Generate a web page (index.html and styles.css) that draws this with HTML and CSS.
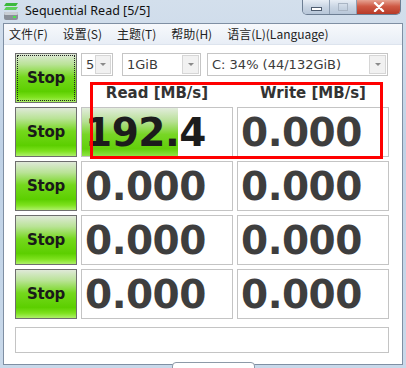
FILE: index.html
```html
<!DOCTYPE html>
<html lang="zh-CN">
<head>
    <meta charset="UTF-8">
    <meta name="viewport" content="width=device-width, initial-scale=1.0">
    <title>Sequential Read [5/5]</title>
    <link rel="stylesheet" href="styles.css">
</head>
<body>
    <div class="window">
        <div class="titlebar">
            <svg class="app-icon" width="16" height="19" viewBox="0 0 16 19">
                <path d="M3 1h12l-2 3H1z" fill="#3cb83c"/>
                <path d="M3 5h12l-2 3H1z" fill="#5fd05a"/>
                <rect x="1" y="10" width="14" height="8" rx="2" fill="#8a9099"/>
                <rect x="1" y="10" width="14" height="3" rx="1.5" fill="#c9ced4"/>
                <rect x="10" y="14" width="3" height="2" fill="#4ee04e"/>
            </svg>
            <span class="title">Sequential Read [5/5]</span>
            <div class="caption-buttons">
                <span class="cap cap-min"><i></i></span>
                <span class="cap cap-max"><i></i></span>
                <span class="cap cap-close">
                    <svg width="12" height="10" viewBox="0 0 12 10">
                        <path d="M2 1l8 8M10 1l-8 8" stroke="#fff" stroke-width="2.4" stroke-linecap="round"/>
                    </svg>
                </span>
            </div>
        </div>

        <div class="client">
            <div class="menubar">
                <span>文件(F)</span>
                <span>设置(S)</span>
                <span>主题(T)</span>
                <span>帮助(H)</span>
                <span>语言(L)(Language)</span>
            </div>

            <div class="panel">
                <button class="stop focused">Stop</button>
                <div class="settings">
                    <div class="combos">
                        <div class="combo combo-count"><span>5</span><b class="arrow"></b></div>
                        <div class="combo combo-size"><span>1GiB</span><b class="arrow"></b></div>
                        <div class="combo combo-drive"><span>C: 34% (44/132GiB)</span><b class="arrow"></b></div>
                    </div>
                    <div class="headers">
                        <span>Read [MB/s]</span>
                        <span>Write [MB/s]</span>
                    </div>
                </div>

                <button class="stop">Stop</button>
                <div class="cell active" style="background-size: 64% 100%">192.4</div>
                <div class="cell">0.000</div>

                <button class="stop">Stop</button>
                <div class="cell">0.000</div>
                <div class="cell">0.000</div>

                <button class="stop">Stop</button>
                <div class="cell">0.000</div>
                <div class="cell">0.000</div>

                <button class="stop">Stop</button>
                <div class="cell">0.000</div>
                <div class="cell">0.000</div>

                <div class="comment"></div>
            </div>
        </div>

        <div class="highlight"></div>
        <div class="task-tab"></div>
    </div>
</body>
</html>
```

FILE: styles.css
```css
body {
    margin: 0;
    width: 406px;
    height: 368px;
    overflow: hidden;
    background: #c5d6e9;
}
.window {
    position: relative;
    width: 406px;
    height: 368px;
    background: linear-gradient(180deg, #d3dfec, #c0d2e6 40%, #c9d9ea);
    font-family: 'DejaVu Sans', sans-serif;
}
.titlebar {
    display: flex;
    align-items: flex-start;
    height: 23px;
    padding-left: 3px;
}
.app-icon {
    margin-top: 2px;
}
.title {
    margin-left: 6px;
    margin-top: 2px;
    font-family: 'Noto Sans', sans-serif;
    font-size: 12.5px;
    color: #111;
    line-height: 17px;
}
.caption-buttons {
    display: flex;
    margin-left: auto;
    margin-right: 5px;
    height: 14px;
    border: 1px solid #6d7e93;
    border-top: none;
    border-radius: 0 0 5px 5px;
    overflow: hidden;
}
.cap {
    display: flex;
    align-items: center;
    justify-content: center;
    width: 26px;
    background: linear-gradient(180deg, #e7edf5, #c9d5e3 50%, #b7c6d8);
    border-right: 1px solid #8d9db1;
}
.cap-min i {
    width: 9px;
    height: 2px;
    margin-top: 4px;
    border: 1px solid #4f5d70;
    background: #fff;
}
.cap-max i {
    width: 8px;
    height: 6px;
    border: 1px solid #a9b5c4;
}
.cap-close {
    width: 43px;
    border-right: none;
    background: linear-gradient(180deg, #e6a393, #cf5a45 45%, #b73a28);
}
.client {
    margin: 0 3px;
    height: 342px;
    background: #fff;
    border: 1px solid #7f8fa3;
    box-sizing: border-box;
}
.menubar {
    display: flex;
    gap: 15px;
    height: 20px;
    padding-left: 5px;
    font-family: 'Noto Sans CJK SC', sans-serif;
    font-size: 12px;
    line-height: 20px;
    color: #222;
    background: linear-gradient(180deg, #f7f9fc, #e8eef6);
    border-bottom: 1px solid #dde4ee;
}
.panel {
    display: grid;
    grid-template-columns: 62px 152px 152px;
    grid-template-rows: 50px repeat(4, 50px) 30px;
    gap: 4px;
    padding: 8px 0 0 11px;
}
.stop {
    margin: 0;
    padding: 0;
    border: 1px solid #6e6e6e;
    font-family: 'DejaVu Sans', sans-serif;
    font-weight: bold;
    font-size: 15px;
    letter-spacing: -0.3px;
    color: #1a1a1a;
    background: linear-gradient(180deg, #dfe9d8 0%, #b9e396 22%, #74d81c 48%, #5ccf00 78%, #7ee21e 90%, #aef06a 100%);
    cursor: pointer;
}
.stop.focused {
    outline: 1px dotted #222;
    outline-offset: -3px;
}
.settings {
    grid-column: 2 / 4;
    display: flex;
    flex-direction: column;
}
.combos {
    display: flex;
    height: 23px;
}
.combo {
    display: flex;
    align-items: center;
    box-sizing: border-box;
    height: 23px;
    border: 1px solid #c5c5c5;
    font-size: 13px;
    color: #3a3a3a;
}
.combo span {
    flex: 1;
    padding-left: 4px;
}
.combo-count {
    width: 32px;
}
.combo-size {
    width: 79px;
    margin-left: 9px;
}
.combo-drive {
    width: 181px;
    margin-left: 6px;
}
.arrow {
    display: flex;
    align-items: center;
    justify-content: center;
    align-self: stretch;
    width: 15px;
    margin: 1px;
    border: 1px solid #d6d6d6;
    background: #f1f1f1;
}
.arrow::after {
    content: "";
    border-left: 3px solid transparent;
    border-right: 3px solid transparent;
    border-top: 3px solid #8a8a8a;
}
.headers {
    display: grid;
    grid-template-columns: 152px 152px;
    gap: 4px;
    margin-top: auto;
    height: 20px;
    line-height: 20px;
    text-align: center;
    font-weight: bold;
    font-size: 15px;
    color: #333;
}
.cell {
    box-sizing: border-box;
    border: 1px solid #c4c4c4;
    padding: 1px 0 0 3px;
    font-weight: bold;
    font-size: 39px;
    line-height: 47px;
    color: #3e3e3e;
    letter-spacing: -0.5px;
    background: #fff;
}
.cell.active {
    color: #1c1c1c;
    background: linear-gradient(180deg, #e2ecdc 0%, #b7e095 28%, #78d626 55%, #62d00a 85%, #8ee443 100%) no-repeat #fff;
}
.comment {
    grid-column: 1 / 4;
    margin-top: 4px;
    border: 1px solid #c4c4c4;
}
.highlight {
    position: absolute;
    left: 90px;
    top: 82px;
    width: 293px;
    height: 77px;
    box-sizing: border-box;
    border: 3px solid #f00;
}
.task-tab {
    position: absolute;
    left: 172px;
    top: 362px;
    width: 81px;
    height: 8px;
    background: #fff;
    border: 1px solid #8e9aa8;
    border-radius: 4px 4px 0 0;
}
```
